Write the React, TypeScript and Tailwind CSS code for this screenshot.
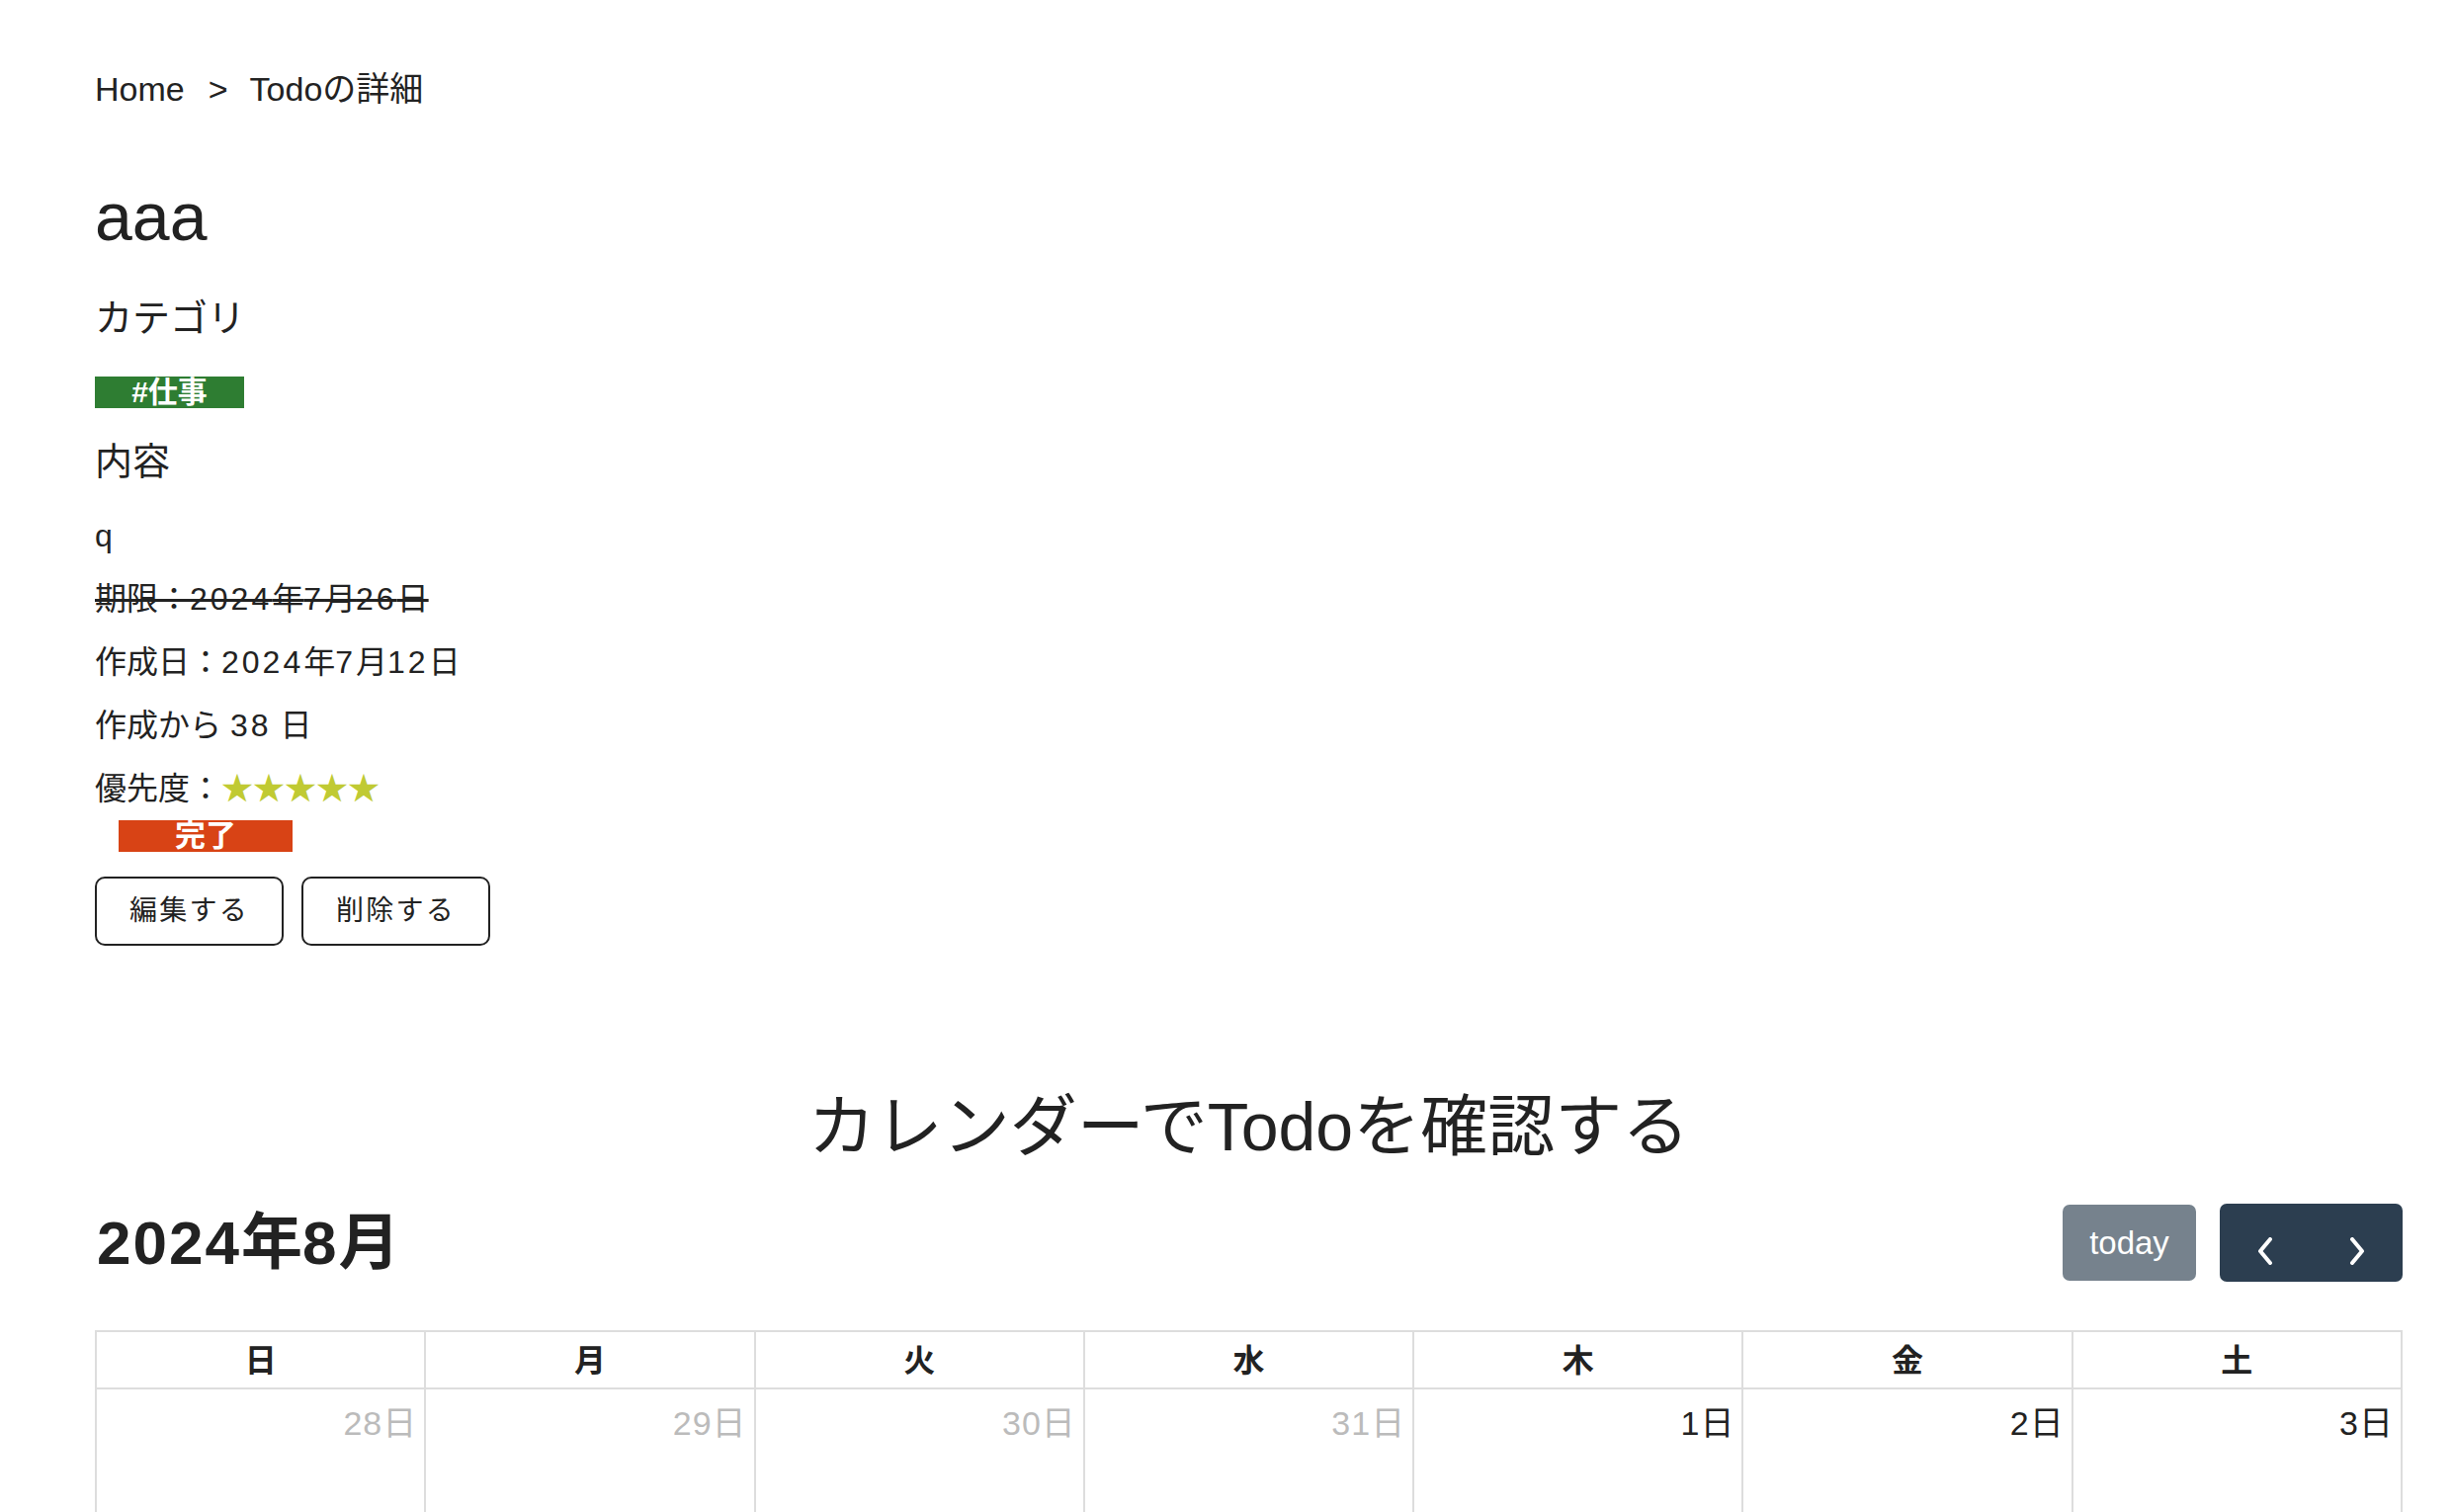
import React from "react";

const weeks = [
  [
    { d: 28, other: true },
    { d: 29, other: true },
    { d: 30, other: true },
    { d: 31, other: true },
    { d: 1 },
    { d: 2 },
    { d: 3 },
  ],
  [4, 5, 6, 7, 8, 9, 10].map((d) => ({ d })),
  [11, 12, 13, 14, 15, 16, 17].map((d) => ({ d })),
  [18, 19, 20, 21, 22, 23, 24].map((d) => ({ d })),
  [25, 26, 27, 28, 29, 30, 31].map((d) => ({ d })),
] as { d: number; other?: boolean }[][];

const weekdays = ["日", "月", "火", "水", "木", "金", "土"];

// digits in the original font run a bit wider than Arial's
function Num({ children }: { children: React.ReactNode }) {
  return <span className="tracking-[3px]">{children}</span>;
}

function Chevron({ dir }: { dir: "left" | "right" }) {
  return (
    <svg width="16" height="28" viewBox="0 0 16 28" fill="none">
      <polyline
        points={dir === "left" ? "13,2 3,14 13,26" : "3,2 13,14 3,26"}
        stroke="white"
        strokeWidth="4"
        strokeLinecap="round"
        strokeLinejoin="round"
      />
    </svg>
  );
}

function Calendar() {
  return (
    <section>
      <div className="mt-[38px] flex h-[79px] items-center justify-between">
        <h2 className="pl-[2px] text-[62px] font-bold leading-none">
          <span className="tracking-[2px]">2024</span>年<span className="tracking-[2px]">8</span>月
        </h2>
        <div className="flex items-center">
          <button className="h-[77px] w-[135px] rounded-[7px] bg-[#76828d] text-[33px] text-white">
            today
          </button>
          <div className="ml-[24px] flex overflow-hidden rounded-[7px]">
            <button className="flex h-[79px] w-[92px] items-center justify-center bg-[#2c3e50] pt-[16px]">
              <Chevron dir="left" />
            </button>
            <button className="flex h-[79px] w-[93px] items-center justify-center bg-[#2c3e50] pt-[16px]">
              <Chevron dir="right" />
            </button>
          </div>
        </div>
      </div>

      <div className="mt-[49px] grid grid-cols-7 border-l-2 border-t-2 border-[#ddd]">
        {weekdays.map((w) => (
          <div
            key={w}
            className="flex h-[58px] items-center justify-center border-b-2 border-r-2 border-[#ddd] pt-[2px] text-[32px] font-bold">
            {w}
          </div>
        ))}
        {weeks.flat().map((c, i) => (
          <div
            key={i}
            className={`h-[210px] border-b-2 border-r-2 border-[#ddd] pr-[8px] pt-[14px] text-right text-[34px] leading-[40px] ${
              c.other ? "text-[#bbb]" : "text-[#222]"
            }`}>
            <span className="tracking-[1px]">{c.d}</span>日
          </div>
        ))}
      </div>
    </section>
  );
}

export default function App() {
  return (
    <div className="min-h-screen bg-white pb-20 pl-[96px] pr-[51px] pt-[66px] font-['Liberation_Sans','Noto_Sans_CJK_JP',sans-serif] text-[#222]">
      {/* breadcrumb */}
      <nav className="flex text-[34px] leading-[48px]">
        <span>Home</span>
        <span className="ml-[24px] mr-[22px]">&gt;</span>
        <span>Todoの詳細</span>
      </nav>

      <h1 className="mt-[63px] text-[68px] leading-[84px]">aaa</h1>

      <h2 className="mt-[33px] text-[38px] leading-[56px]">カテゴリ</h2>
      <div className="mt-[31px] flex">
        <span className="h-[32px] w-[151px] bg-[#2e7d32] text-center text-[30px] font-bold leading-[32px] text-white">
          #仕事
        </span>
      </div>

      <h2 className="mt-[26px] text-[38px] leading-[56px]">内容</h2>
      <div className="mt-[15px] text-[32px] leading-[64px]">
        <p>q</p>
        <p className="line-through decoration-[3px]">
          期限：<Num>2024</Num>年<Num>7</Num>月<Num>26</Num>日
        </p>
        <p>
          作成日：<Num>2024</Num>年<Num>7</Num>月<Num>12</Num>日
        </p>
        <p>
          作成から <Num>38</Num> 日
        </p>
        <p>
          優先度：<span className="text-[#c0ca33]">★★★★★</span>
        </p>
      </div>
      <div className="flex">
        <span className="ml-[24px] h-[32px] w-[176px] bg-[#d84315] text-center text-[31px] font-bold leading-[32px] text-white">
          完了
        </span>
      </div>

      <div className="mt-[25px] flex gap-[18px]">
        <button className="h-[70px] w-[191px] rounded-[10px] border-2 border-[#222] text-[28px] tracking-[0.08em]">
          編集する
        </button>
        <button className="h-[70px] w-[191px] rounded-[10px] border-2 border-[#222] text-[28px] tracking-[0.08em]">
          削除する
        </button>
      </div>

      <h2 className="mt-[144px] text-center text-[68px] leading-[79px]">カレンダーでTodoを確認する</h2>

      <Calendar />
    </div>
  );
}
